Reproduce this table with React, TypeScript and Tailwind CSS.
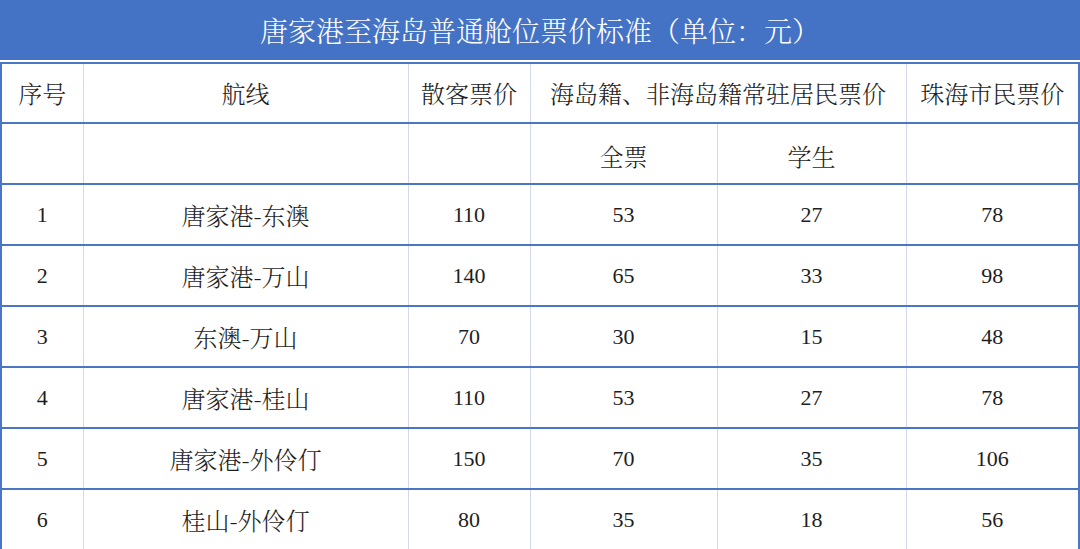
const rows = [
  { no: "1", route: "唐家港-东澳", fare: "110", full: "53", student: "27", zhuhai: "78" },
  { no: "2", route: "唐家港-万山", fare: "140", full: "65", student: "33", zhuhai: "98" },
  { no: "3", route: "东澳-万山", fare: "70", full: "30", student: "15", zhuhai: "48" },
  { no: "4", route: "唐家港-桂山", fare: "110", full: "53", student: "27", zhuhai: "78" },
  { no: "5", route: "唐家港-外伶仃", fare: "150", full: "70", student: "35", zhuhai: "106" },
  { no: "6", route: "桂山-外伶仃", fare: "80", full: "35", student: "18", zhuhai: "56" },
];

const cjk = "font-['Noto_Serif_CJK_SC','Liberation_Serif','Noto_Sans_CJK_SC',serif]";
const cell = "border-r border-r-[#d3d9e8] border-b-2 border-b-[#4b76c5] text-center align-middle p-0";
const num = "text-[22px] font-['Liberation_Serif',serif]";

export default function App() {
  return (
    <div className={`w-[1080px] h-[549px] overflow-hidden bg-white text-[#1e1e1e] ${cjk}`}>
      <div className="h-[62px] bg-[#4472c4] border-b-2 border-white flex items-center justify-center text-white text-[28px] font-light">
        唐家港至海岛普通舱位票价标准（单位：元）
      </div>
      <div className="border-x-2 border-[#4b76c5] border-t-2 border-t-[#4b76c5]">
        <table className="w-[1076px] table-fixed border-collapse">
          <colgroup>
            <col className="w-[81px]" />
            <col className="w-[325px]" />
            <col className="w-[122px]" />
            <col className="w-[187px]" />
            <col className="w-[189px]" />
            <col className="w-[172px]" />
          </colgroup>
          <tbody className="text-[24px] font-light">
            <tr className="h-[59px]">
              <td className={cell}>序号</td>
              <td className={cell}>航线</td>
              <td className={cell}>散客票价</td>
              <td className={cell} colSpan={2}>海岛籍、非海岛籍常驻居民票价</td>
              <td className={`${cell} border-r-0`}>珠海市民票价</td>
            </tr>
            <tr className="h-[61px]">
              <td className={cell}></td>
              <td className={cell}></td>
              <td className={cell}></td>
              <td className={`${cell} pt-1`}>全票</td>
              <td className={`${cell} pt-1`}>学生</td>
              <td className={`${cell} border-r-0`}></td>
            </tr>
            {rows.map((r) => (
              <tr key={r.no} className="h-[61px]">
                <td className={`${cell} ${num}`}>{r.no}</td>
                <td className={cell}>{r.route}</td>
                <td className={`${cell} ${num}`}>{r.fare}</td>
                <td className={`${cell} ${num}`}>{r.full}</td>
                <td className={`${cell} ${num}`}>{r.student}</td>
                <td className={`${cell} border-r-0 ${num}`}>{r.zhuhai}</td>
              </tr>
            ))}
          </tbody>
        </table>
      </div>
    </div>
  );
}
